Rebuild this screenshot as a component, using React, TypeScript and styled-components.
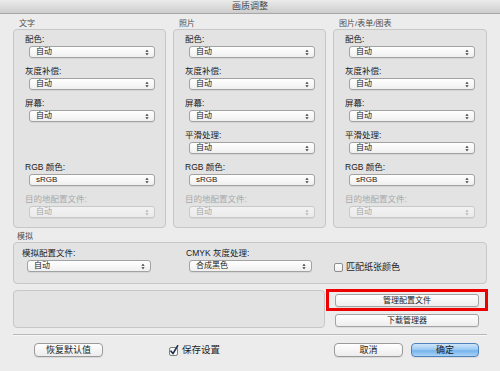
import React from "react";
import styled, { createGlobalStyle } from "styled-components";

const Global = createGlobalStyle`
  html, body { margin: 0; padding: 0; }
  body {
    width: 500px; height: 371px; overflow: hidden; background: #ececec;
    font-family: "Liberation Sans", "Noto Sans CJK SC", sans-serif;
  }
`;

const Window = styled.div`
  width: 500px;
  height: 371px;
  display: flex;
  flex-direction: column;
  background: #ececec;
`;

const TitleBar = styled.div`
  height: 14px;
  flex: none;
  box-sizing: border-box;
  background: linear-gradient(#ebebeb, #cdcdcd);
  border-bottom: 1px solid #a7a7a7;
  display: flex;
  align-items: center;
  justify-content: center;
  font-size: 9px;
  line-height: 13px;
  color: #4a4a4a;
`;

const Content = styled.div`
  padding: 0 13px;
  display: flex;
  flex-direction: column;
`;

const ColumnsRow = styled.div`
  display: grid;
  grid-template-columns: 153px 153px 154px;
  column-gap: 7px;
  margin-top: 5px;
`;

const SectionTitle = styled.div<{ $indent: number }>`
  height: 10px;
  line-height: 10px;
  font-size: 8px;
  color: #505050;
  padding-left: ${(p) => p.$indent}px;
  white-space: nowrap;
`;

const GroupBox = styled.div`
  box-sizing: border-box;
  background: #e3e3e3;
  border: 1px solid #c7c7c7;
  border-radius: 4px;
`;

const ColumnBox = styled(GroupBox)`
  height: 199px;
  padding: 4px 0 0 11px;
`;

const Slot = styled.div`
  height: 32px;
  display: flex;
  flex-direction: column;
`;

const FieldLabel = styled.div<{ $disabled?: boolean }>`
  height: 10px;
  line-height: 10px;
  font-size: 8.5px;
  color: ${(p) => (p.$disabled ? "#a9a9a9" : "#1a1a1a")};
  white-space: nowrap;
`;

const SelectBox = styled.div<{ $disabled?: boolean; $width: number; $offset: number }>`
  box-sizing: border-box;
  width: ${(p) => p.$width}px;
  height: 12px;
  margin-top: 2px;
  margin-left: ${(p) => p.$offset}px;
  display: flex;
  align-items: center;
  padding: 0 5px 0 6px;
  border: 1px solid ${(p) => (p.$disabled ? "#c9c9c9" : "#a2a2a2")};
  border-radius: 3px;
  background: ${(p) =>
    p.$disabled ? "linear-gradient(#f2f2f2, #ebebeb)" : "linear-gradient(#ffffff, #f0f0f0)"};
  box-shadow: 0 1px 0 rgba(0, 0, 0, 0.06);
  font-size: 8px;
  line-height: 10px;
  color: ${(p) => (p.$disabled ? "#a6a6a6" : "#222")};
`;

const SelectText = styled.span`
  flex: 1;
  white-space: nowrap;
`;

const Arrows = ({ color }: { color: string }) => (
  <svg width="4" height="7" viewBox="0 0 4 7">
    <polygon points="0.4,2.8 2,0.8 3.6,2.8" fill={color} />
    <polygon points="0.4,4.2 2,6.2 3.6,4.2" fill={color} />
  </svg>
);

const Select = ({
  value,
  disabled,
  width = 126,
  offset = 4,
}: {
  value: string;
  disabled?: boolean;
  width?: number;
  offset?: number;
}) => (
  <SelectBox $disabled={disabled} $width={width} $offset={offset}>
    <SelectText>{value}</SelectText>
    <Arrows color={disabled ? "#b0b0b0" : "#333"} />
  </SelectBox>
);

const SimTitleWrap = styled.div`
  margin-top: 4px;
`;

const SimBox = styled(GroupBox)`
  height: 42px;
  display: flex;
  align-items: flex-start;
  padding: 5px 0 0 8px;
`;

const SimField = styled.div<{ $width: number; $gap: number }>`
  width: ${(p) => p.$width}px;
  margin-left: ${(p) => p.$gap}px;
  display: flex;
  flex-direction: column;
`;

const CheckRow = styled.label<{ $top: number; $gap: number; $size: number }>`
  display: flex;
  align-items: center;
  margin-top: ${(p) => p.$top}px;
  margin-left: ${(p) => p.$gap}px;
  font-size: ${(p) => p.$size}px;
  line-height: 10px;
  color: #1e1e1e;
  white-space: nowrap;
  gap: 3px;
`;

const CheckSquare = styled.span`
  box-sizing: border-box;
  width: 9px;
  height: 9px;
  border: 1px solid #8e8e8e;
  border-radius: 2px;
  background: linear-gradient(#ffffff, #eeeeee);
  display: inline-block;
`;

const CheckedBox = () => (
  <svg width="10" height="11" viewBox="0 0 10 11">
    <rect x="0.5" y="2.5" width="8" height="8" rx="1.6" fill="#f7f7f7" stroke="#7c7c7c" />
    <path d="M2 6.2 L4 8.6 L8.6 0.8" fill="none" stroke="#1d2a44" strokeWidth="1.6" strokeLinecap="round" strokeLinejoin="round" />
  </svg>
);

const BottomRow = styled.div`
  display: flex;
  margin-top: 6px;
`;

const InfoBox = styled(GroupBox)`
  width: 312px;
  height: 38px;
`;

const ButtonsCol = styled.div`
  width: 144px;
  margin-left: 10px;
  padding-top: 4px;
  display: flex;
  flex-direction: column;
  gap: 7px;
`;

const HighlightWrap = styled.div`
  position: relative;
`;

const Highlight = styled.div`
  position: absolute;
  left: -9px;
  right: -9px;
  top: -5px;
  bottom: -4px;
  border: 3px solid #ee0000;
  pointer-events: none;
`;

const SmallButton = styled.div`
  box-sizing: border-box;
  height: 13px;
  border: 1px solid #a3a3a3;
  border-radius: 3px;
  background: linear-gradient(#ffffff, #ededed);
  box-shadow: 0 1px 0 rgba(0, 0, 0, 0.06);
  display: flex;
  align-items: center;
  justify-content: center;
  font-size: 8px;
  line-height: 10px;
  color: #222;
`;

const Separator = styled.div`
  height: 1px;
  margin-top: 6px;
  background: #b9b9b9;
  box-shadow: 0 1px 0 #f6f6f6;
`;

const Footer = styled.div`
  display: flex;
  align-items: center;
  margin-top: 8px;
  padding: 0 8px 0 21px;
`;

const Button = styled.div<{ $primary?: boolean; $width: number; $gap?: number }>`
  box-sizing: border-box;
  width: ${(p) => p.$width}px;
  height: 14px;
  margin-left: ${(p) => p.$gap ?? 0}px;
  border: 1px solid ${(p) => (p.$primary ? "#4f82bd" : "#9a9a9a")};
  border-radius: 4px;
  background: ${(p) =>
    p.$primary
      ? "linear-gradient(#cfe6fb 0%, #97c7f2 50%, #76b3ec 55%, #a8d3f6 100%)"
      : "linear-gradient(#ffffff, #ececec)"};
  box-shadow: 0 1px 0 rgba(0, 0, 0, 0.08);
  display: flex;
  align-items: center;
  justify-content: center;
  font-size: 9px;
  line-height: 10px;
  color: #1a1a1a;
`;

const Spacer = styled.div`
  flex: 1;
`;

type FieldDef = { label: string; value: string; disabled?: boolean } | null;

const columns: { title: string; fields: FieldDef[] }[] = [
  {
    title: "文字",
    fields: [
      { label: "配色:", value: "自动" },
      { label: "灰度补偿:", value: "自动" },
      { label: "屏幕:", value: "自动" },
      null,
      { label: "RGB 颜色:", value: "sRGB" },
      { label: "目的地配置文件:", value: "自动", disabled: true },
    ],
  },
  {
    title: "照片",
    fields: [
      { label: "配色:", value: "自动" },
      { label: "灰度补偿:", value: "自动" },
      { label: "屏幕:", value: "自动" },
      { label: "平滑处理:", value: "自动" },
      { label: "RGB 颜色:", value: "sRGB" },
      { label: "目的地配置文件:", value: "自动", disabled: true },
    ],
  },
  {
    title: "图片/表单/图表",
    fields: [
      { label: "配色:", value: "自动" },
      { label: "灰度补偿:", value: "自动" },
      { label: "屏幕:", value: "自动" },
      { label: "平滑处理:", value: "自动" },
      { label: "RGB 颜色:", value: "sRGB" },
      { label: "目的地配置文件:", value: "自动", disabled: true },
    ],
  },
];

export default function App() {
  return (
    <>
      <Global />
      <Window>
        <TitleBar>画质调整</TitleBar>
        <Content>
          <ColumnsRow>
            {columns.map((col) => (
              <div key={col.title}>
                <SectionTitle $indent={6}>{col.title}</SectionTitle>
                <ColumnBox>
                  {col.fields.map((f, i) => (
                    <Slot key={i}>
                      {f && (
                        <>
                          <FieldLabel $disabled={f.disabled}>{f.label}</FieldLabel>
                          <Select value={f.value} disabled={f.disabled} />
                        </>
                      )}
                    </Slot>
                  ))}
                </ColumnBox>
              </div>
            ))}
          </ColumnsRow>

          <SimTitleWrap>
            <SectionTitle $indent={4}>模拟</SectionTitle>
          </SimTitleWrap>
          <SimBox>
            <SimField $width={130} $gap={0}>
              <FieldLabel>模拟配置文件:</FieldLabel>
              <Select value="自动" width={124} offset={5} />
            </SimField>
            <SimField $width={130} $gap={34}>
              <FieldLabel>CMYK 灰度处理:</FieldLabel>
              <Select value="合成黑色" width={123} offset={3} />
            </SimField>
            <CheckRow $top={14} $gap={18} $size={9}>
              <CheckSquare />
              匹配纸张颜色
            </CheckRow>
          </SimBox>

          <BottomRow>
            <InfoBox />
            <ButtonsCol>
              <HighlightWrap>
                <SmallButton>管理配置文件</SmallButton>
                <Highlight />
              </HighlightWrap>
              <SmallButton>下载管理器</SmallButton>
            </ButtonsCol>
          </BottomRow>

          <Separator />

          <Footer>
            <Button $width={69}>恢复默认值</Button>
            <CheckRow $top={0} $gap={66} $size={9.5}>
              <CheckedBox />
              保存设置
            </CheckRow>
            <Spacer />
            <Button $width={69}>取消</Button>
            <Button $width={68} $gap={8} $primary>
              确定
            </Button>
          </Footer>
        </Content>
      </Window>
    </>
  );
}
